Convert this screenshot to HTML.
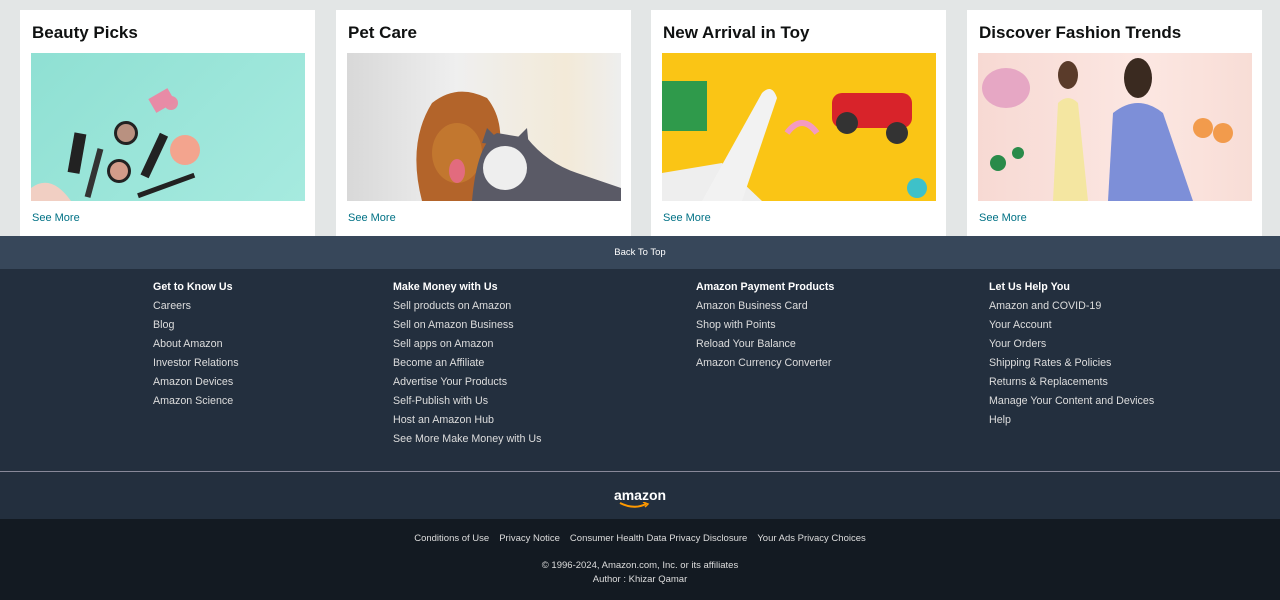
<!DOCTYPE html>
<html><head><meta charset="utf-8"><style>
*{margin:0;padding:0;box-sizing:border-box}
body{width:1280px;height:600px;overflow:hidden;background:#e3e6e6;font-family:"Liberation Sans",Arial,sans-serif;position:relative}
.card{position:absolute;top:10px;width:295px;height:226px;background:#fff}
.card h2{position:absolute;left:12px;top:13px;font-size:17px;font-weight:bold;color:#0f1111}
.card .img{position:absolute;left:11px;top:43px;width:274px;height:148px;overflow:hidden}
.card a{position:absolute;left:12px;top:202px;font-size:11px;color:#007185;text-decoration:none}
.btt{position:absolute;top:236px;left:0;width:1280px;height:33px;background:#37475a;color:#fff;font-size:9.5px;text-align:center;line-height:34px}
.foot{position:absolute;top:269px;left:0;width:1280px;height:250px;background:#232f3e}
.col{position:absolute;top:12px;color:#ddd;font-size:10.7px}
.col b{display:block;color:#fff;font-size:10.7px;height:19px;line-height:12px}
.col div{height:19px;line-height:12px}
.line{position:absolute;top:202px;left:0;width:1280px;height:1px;background:#889}
.logo{position:absolute;top:218px;left:0;width:1280px;text-align:center;color:#fff;font-weight:bold;font-size:14px}
.bot{position:absolute;top:519px;left:0;width:1280px;height:81px;background:#131a22;color:#ddd;font-size:9.5px;text-align:center}
</style></head><body>
<div class="card" style="left:20px"><h2>Beauty Picks</h2><div class="img" style="background:linear-gradient(135deg,#8fe0d3,#a6eadf)">
<svg width="274" height="148"><circle cx="140" cy="50" r="7" fill="#e58fa6"/><rect x="120" y="40" width="22" height="16" fill="#e88ba6" transform="rotate(-30 130 48)"/><circle cx="95" cy="80" r="12" fill="#222"/><circle cx="95" cy="80" r="9" fill="#b99180"/><circle cx="88" cy="118" r="12" fill="#222"/><circle cx="88" cy="118" r="9" fill="#d39c8a"/><circle cx="154" cy="97" r="15" fill="#f3a48e"/><rect x="120" y="80" width="9" height="46" fill="#222" transform="rotate(25 125 100)"/><rect x="40" y="80" width="12" height="40" fill="#222" transform="rotate(10 45 100)"/><rect x="60" y="95" width="6" height="50" fill="#333" transform="rotate(15 63 120)"/><path d="M0 135 Q20 120 40 148 L0 148Z" fill="#f1cfc3"/><rect x="105" y="130" width="60" height="5" fill="#222" transform="rotate(-20 135 132)"/></svg></div><a>See More</a></div>
<div class="card" style="left:336px"><h2>Pet Care</h2><div class="img" style="background:linear-gradient(90deg,#d8d8d8,#efefef 40%,#f3ead8 80%,#eee)">
<svg width="274" height="148"><path d="M75 148 Q60 90 85 50 Q110 30 140 45 Q160 70 150 110 L180 148Z" fill="#b3642a"/><ellipse cx="110" cy="100" rx="25" ry="30" fill="#c2772f"/><ellipse cx="110" cy="118" rx="8" ry="12" fill="#e26b7e"/><path d="M125 148 Q130 90 150 80 L180 85 Q200 110 230 120 L274 135 L274 148Z" fill="#5a5a66"/><ellipse cx="158" cy="115" rx="22" ry="22" fill="#eee"/><path d="M135 90 L140 75 L150 85 L170 85 L180 75 L182 95Z" fill="#5a5a66"/></svg></div><a>See More</a></div>
<div class="card" style="left:651px"><h2>New Arrival in Toy</h2><div class="img" style="background:#fac515">
<svg width="274" height="148"><rect x="0" y="28" width="45" height="50" fill="#2f9a4b"/><path d="M0 120 L60 110 L100 148 L0 148Z" fill="#eee"/><path d="M40 148 L100 40 Q110 30 115 45 L80 148Z" fill="#f2f2f2"/><path d="M125 80 Q140 60 155 80" stroke="#f49ac1" stroke-width="6" fill="none"/><rect x="170" y="40" width="80" height="35" rx="10" fill="#d8232a"/><circle cx="185" cy="70" r="11" fill="#333"/><circle cx="235" cy="80" r="11" fill="#333"/><circle cx="255" cy="135" r="10" fill="#3ec1c9"/></svg></div><a>See More</a></div>
<div class="card" style="left:967px"><h2>Discover Fashion Trends</h2><div class="img" style="background:linear-gradient(90deg,#f7d9d3,#fce7e2 60%,#f8ddd6)">
<svg width="274" height="148"><ellipse cx="28" cy="35" rx="24" ry="20" fill="#e6a7c4"/><path d="M75 148 L80 50 Q90 40 100 50 L110 148Z" fill="#f4e6a1"/><ellipse cx="90" cy="22" rx="10" ry="14" fill="#5a3b2a"/><path d="M130 148 L135 60 Q160 40 185 60 L215 148Z" fill="#7d8fd8"/><ellipse cx="160" cy="25" rx="14" ry="20" fill="#3a2a20"/><circle cx="225" cy="75" r="10" fill="#f29b4c"/><circle cx="245" cy="80" r="10" fill="#f29b4c"/><circle cx="20" cy="110" r="8" fill="#2a8b4a"/><circle cx="40" cy="100" r="6" fill="#2a8b4a"/></svg></div><a>See More</a></div>
<div class="btt">Back To Top</div>
<div class="foot">
<div class="col" style="left:153px"><b>Get to Know Us</b><div>Careers</div><div>Blog</div><div>About Amazon</div><div>Investor Relations</div><div>Amazon Devices</div><div>Amazon Science</div></div>
<div class="col" style="left:393px"><b>Make Money with Us</b><div>Sell products on Amazon</div><div>Sell on Amazon Business</div><div>Sell apps on Amazon</div><div>Become an Affiliate</div><div>Advertise Your Products</div><div>Self-Publish with Us</div><div>Host an Amazon Hub</div><div>See More Make Money with Us</div></div>
<div class="col" style="left:696px"><b>Amazon Payment Products</b><div>Amazon Business Card</div><div>Shop with Points</div><div>Reload Your Balance</div><div>Amazon Currency Converter</div></div>
<div class="col" style="left:989px"><b>Let Us Help You</b><div>Amazon and COVID-19</div><div>Your Account</div><div>Your Orders</div><div>Shipping Rates &amp; Policies</div><div>Returns &amp; Replacements</div><div>Manage Your Content and Devices</div><div>Help</div></div>
<div class="line"></div>
<div class="logo">amazon<svg style="position:absolute;left:618px;top:15px" width="32" height="7"><path d="M2 1 Q16 8 28 2" stroke="#f90" stroke-width="2" fill="none"/><path d="M25 0 L30 2 L27 5" stroke="#f90" stroke-width="1.5" fill="none"/></svg></div>
</div>
<div class="bot">
<div style="position:absolute;top:14px;width:1280px"><span style="margin-right:10px">Conditions of Use</span><span style="margin-right:10px">Privacy Notice</span><span style="margin-right:10px">Consumer Health Data Privacy Disclosure</span><span>Your Ads Privacy Choices</span></div>
<div style="position:absolute;top:41px;width:1280px">© 1996-2024, Amazon.com, Inc. or its affiliates</div>
<div style="position:absolute;top:55px;width:1280px">Author : Khizar Qamar</div>
</div>
</body></html>
